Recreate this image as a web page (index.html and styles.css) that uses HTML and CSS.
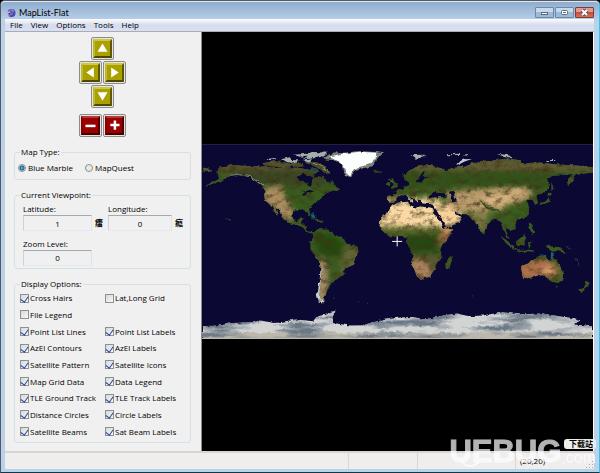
FILE: index.html
```html
<!DOCTYPE html>
<html lang="en">
<head>
  <meta charset="UTF-8" />
  <title>MapList-Flat</title>
  <link rel="stylesheet" href="styles.css">
</head>
<body>
  <div class="window">
    <header class="titlebar">
      <svg class="app-icon" viewBox="0 0 20 20">
        <circle cx="11" cy="10" r="8" fill="#4a43a8"/>
        <path d="M5 5 Q11 0 17 6 L15 9 L10 5 Z" fill="#8c86d8"/>
        <path d="M1 8 L8 6 L11 12 L7 16 L2 13 Z" fill="#b9b4e0"/>
        <path d="M9 8 L15 10 L12 15 L8 13 Z" fill="#6f76b4"/>
        <path d="M4 11 L9 9 L8 15 Z" fill="#39345f"/>
      </svg>
      <span class="title">MapList-Flat</span>
      <div class="window-buttons">
        <button type="button" aria-label="Minimize"><svg viewBox="0 0 17 9"><rect x="5.500" y="4.500" width="6" height="2" fill="#fff" stroke="#5d6a7c"/></svg></button>
        <button type="button" aria-label="Maximize"><svg viewBox="0 0 17 9"><rect x="5.500" y="2.500" width="6" height="4" rx="1" fill="#fff" stroke="#5d6a7c"/><rect x="7" y="4" width="3" height="1" fill="#5d6a7c"/></svg></button>
        <button type="button" class="close" aria-label="Close"><svg viewBox="0 0 17 9"><path d="M6 2 L11 7 M11 2 L6 7" stroke="#6b5361" stroke-width="4"/><path d="M6 2 L11 7 M11 2 L6 7" stroke="#fff" stroke-width="2"/></svg></button>
      </div>
    </header>

    <nav class="menu">
      <a href="#">File</a>
      <a href="#">View</a>
      <a href="#">Options</a>
      <a href="#">Tools</a>
      <a href="#">Help</a>
    </nav>

    <main class="content">
      <form class="sidebar">
        <div class="pad">
          <button type="button" class="key wide" aria-label="Up"><svg viewBox="0 0 18 18"><path d="M9 3 L15 13 H3 Z"/></svg></button>
          <button type="button" class="key" aria-label="Left"><svg viewBox="0 0 18 18"><path d="M4 9 L13 3 V15 Z"/></svg></button>
          <button type="button" class="key" aria-label="Right"><svg viewBox="0 0 18 18"><path d="M14 9 L5 3 V15 Z"/></svg></button>
          <button type="button" class="key wide" aria-label="Down"><svg viewBox="0 0 18 18"><path d="M9 14 L15 4 H3 Z"/></svg></button>
        </div>
        <div class="pad zoom">
          <button type="button" class="key red" aria-label="Zoom out"><svg viewBox="0 0 18 18"><path d="M3 8 H15 V11 H3 Z"/></svg></button>
          <button type="button" class="key red" aria-label="Zoom in"><svg viewBox="0 0 18 18"><path d="M8 3 H11 V7 H15 V10 H11 V14 H8 V10 H4 V7 H8 Z"/></svg></button>
        </div>

        <fieldset class="map-type">
          <legend>Map Type:</legend>
          <label><input type="radio" name="map" checked>Blue Marble</label>
          <label><input type="radio" name="map">MapQuest</label>
        </fieldset>

        <fieldset class="viewpoint">
          <legend>Current Viewpoint:</legend>
          <div class="field">
            <label for="lat">Latitude:</label>
            <input type="text" id="lat" value="1"><span class="unit">癗</span>
          </div>
          <div class="field">
            <label for="lon">Longitude:</label>
            <input type="text" id="lon" value="0"><span class="unit">癊</span>
          </div>
          <div class="field">
            <label for="zoom">Zoom Level:</label>
            <input type="text" id="zoom" value="0">
          </div>
        </fieldset>

        <fieldset class="display">
          <legend>Display Options:</legend>
          <div class="options">
            <label><input type="checkbox" checked>Cross Hairs</label>
            <label><input type="checkbox">Lat,Long Grid</label>
            <label class="first"><input type="checkbox">File Legend</label>
            <label class="first"><input type="checkbox" checked>Point List Lines</label>
            <label><input type="checkbox" checked>Point List Labels</label>
            <label><input type="checkbox" checked>AzEl Contours</label>
            <label><input type="checkbox" checked>AzEl Labels</label>
            <label><input type="checkbox" checked>Satellite Pattern</label>
            <label><input type="checkbox" checked>Satellite Icons</label>
            <label><input type="checkbox" checked>Map Grid Data</label>
            <label><input type="checkbox" checked>Data Legend</label>
            <label><input type="checkbox" checked>TLE Ground Track</label>
            <label><input type="checkbox" checked>TLE Track Labels</label>
            <label><input type="checkbox" checked>Distance Circles</label>
            <label><input type="checkbox" checked>Circle Labels</label>
            <label><input type="checkbox" checked>Satellite Beams</label>
            <label><input type="checkbox" checked>Sat Beam Labels</label>
          </div>
        </fieldset>
      </form>

      <section class="map">
        <svg viewBox="6 12 1176 588" role="img" aria-label="World map">
          <defs>
            <filter id="rough" x="0" y="0" width="100%" height="100%" color-interpolation-filters="sRGB">
              <feTurbulence type="fractalNoise" baseFrequency="0.07" numOctaves="2" seed="4" result="n"/>
              <feDisplacementMap in="SourceGraphic" in2="n" scale="12" xChannelSelector="R" yChannelSelector="G"/>
              <feGaussianBlur stdDeviation="1"/>
            </filter>
            <filter id="soft" x="-20%" y="-20%" width="140%" height="140%" color-interpolation-filters="sRGB"><feGaussianBlur stdDeviation="8"/></filter>
            <filter id="grain" x="0" y="0" width="100%" height="100%" color-interpolation-filters="sRGB">
              <feTurbulence type="fractalNoise" baseFrequency="0.035 0.06" numOctaves="4" seed="9"/>
              <feColorMatrix values="0 0 0 0 0.25  0 0 0 0 0.2  0 0 0 0 0.08  2 0 0 0 -0.900"/>
            </filter>
            <filter id="ice" x="0" y="0" width="100%" height="100%" color-interpolation-filters="sRGB">
              <feTurbulence type="fractalNoise" baseFrequency="0.008 0.05" numOctaves="3" seed="2"/>
              <feColorMatrix values="0 0 0 0 0.42  0 0 0 0 0.47  0 0 0 0 0.52  3 0 0 0 -1.200"/>
            </filter>
            <clipPath id="land">
              <!-- North America -->
              <path d="M50 92 62 80 95 76 140 78 190 80 225 84 260 82 300 84 330 90 345 84 355 95 340 103 343 114 318 100 298 106 290 115 300 124 320 128 332 143 336 132 338 118 352 108 372 112 385 126 398 124 410 138 418 150 400 152 385 158 372 165 358 178 345 188 330 203 328 210 334 225 326 230 320 213 300 208 285 212 278 225 280 240 290 245 300 236 314 236 306 252 322 258 322 272 335 278 345 275 340 284 322 277 308 262 285 254 262 248 250 232 238 215 225 200 232 220 237 230 226 220 215 200 200 188 193 170 194 150 185 138 170 125 150 112 120 104 95 106 75 118 45 130 15 138 40 125 60 114 50 105Z"/>
              <path d="M6 82 24 86 40 92 22 96 6 94ZM188 70 225 64 255 68 280 74 262 82 225 80 195 78ZM318 68 350 66 375 80 392 98 382 102 366 90 345 80ZM274 70 306 70 308 80 280 80ZM330 232 350 238 368 246 350 244ZM352 243 372 243 370 249 352 249ZM521 93 546 92 545 98 525 98Z"/>
              <!-- South America -->
              <path d="M335 280 355 268 385 270 405 285 430 295 445 312 475 322 480 335 468 350 462 375 440 385 430 405 410 420 398 430 385 445 380 460 370 475 375 485 360 485 352 470 358 440 362 410 362 370 348 352 332 325 332 305 342 292Z"/>
              <!-- Africa and Madagascar -->
              <path d="M568 212 578 198 595 189 625 186 632 196 650 204 662 200 690 203 702 208 706 222 718 240 732 262 740 270 762 266 758 280 745 298 730 312 722 330 727 352 712 370 705 390 690 412 662 418 652 410 645 390 635 365 640 345 630 325 622 308 625 295 610 288 585 290 565 287 548 272 540 258 543 235ZM752 350 760 350 750 387 739 389 738 370Z"/>
              <!-- Europe and Asia -->
              <path d="M565 187 567 168 592 166 585 155 600 150 615 142 630 135 628 124 615 118 612 105 630 92 655 80 690 76 725 84 735 92 760 84 800 80 815 70 850 66 890 60 930 55 962 62 970 70 1020 68 1060 72 1110 76 1160 78 1182 82 1182 98 1150 102 1130 106 1122 118 1110 135 1102 132 1108 115 1125 102 1090 106 1060 108 1042 115 1052 128 1048 145 1030 160 1012 170 1017 190 1008 195 1000 180 982 180 990 205 988 225 965 238 950 238 948 250 950 265 935 275 922 262 920 275 932 298 925 295 912 270 905 250 890 236 875 245 860 258 855 284 845 278 832 250 820 238 808 224 785 222 765 215 752 205 770 222 790 232 780 248 755 260 738 266 722 240 706 212 702 194 668 190 665 178 654 176 656 188 642 176 628 170 642 184 636 186 618 168 605 166 590 174 590 185 575 190Z"/>
              <path d="M568 118 580 114 584 124 594 134 595 143 574 143 580 132ZM560 130 572 127 571 138 560 138ZM1057 126 1063 146 1057 154ZM1050 158 1060 166 1048 168 1056 184 1040 191 1022 196 1030 188 1046 180Z"/>
              <!-- Islands and Australia -->
              <path d="M903 288 925 303 946 324 942 329 920 310ZM942 328 975 330 1005 335 1002 339 960 335ZM950 305 975 286 981 294 975 318 952 318ZM986 306 1000 302 990 328ZM988 244 1000 255 1006 282 998 285 990 262ZM1040 316 1060 320 1085 323 1104 341 1075 334 1060 336 1045 326Z"/>
              <path d="M965 380 985 372 1000 362 1020 352 1038 345 1044 358 1055 360 1060 340 1068 358 1080 375 1093 395 1090 418 1075 430 1055 425 1040 412 1015 408 990 415 972 418 968 400ZM1070 438 1079 440 1074 447ZM1158 420 1173 432 1165 442 1145 457 1140 452 1160 438Z"/>
            </clipPath>
            <clipPath id="south"><path d="M6 560 60 558 100 550 160 548 180 543 225 550 290 540 340 545 350 532 385 520 408 513 400 530 400 550 450 558 490 557 520 548 570 538 600 534 640 532 680 540 720 530 770 522 810 530 850 528 910 518 960 525 1030 522 1080 530 1120 535 1145 542 1125 555 1182 560V600H6Z"/></clipPath>
          </defs>
          <rect x="6" y="12" width="1176" height="588" fill="#0b0833"/>
          <g filter="url(#rough)">
            <rect x="-20" y="-20" width="1230" height="640" fill="#0b0833"/>
            <g clip-path="url(#land)">
              <rect x="0" y="0" width="1190" height="600" fill="#3c5a20"/>
              <g filter="url(#soft)">
                <path d="M0 60H420V98H0Z" fill="#57512f"/>
                <path d="M80 92H420V135H180Z" fill="#394623"/>
                <path d="M240 135H400V215H280Z" fill="#375b1d"/>
                <path d="M192 145 245 135 255 170 280 205 282 240 260 240 190 180Z" fill="#aa8d60"/>
                <path d="M335 275 400 285 440 320 420 350 360 345Z" fill="#24490e"/>
                <path d="M430 320H485V400H420Z" fill="#5f6432"/>
                <path d="M358 350 382 370 385 430 375 490H350Z" fill="#a58a68"/>
                <path d="M530 175H720L740 262H530Z" fill="#fad9a4"/>
                <path d="M530 264H735V290H530Z" fill="#526325"/>
                <path d="M620 285H715V335H620Z" fill="#244810"/>
                <path d="M735 265 765 262 750 300 720 320 715 295Z" fill="#a66d46"/>
                <path d="M625 350H730V375H625Z" fill="#5c5730"/>
                <path d="M630 355 665 360 710 388 680 425 640 410Z" fill="#a9805d"/>
                <path d="M700 192 748 190 800 232 740 275Z" fill="#f6d19c"/>
                <path d="M600 60H1185V92H600Z" fill="#625b35"/>
                <path d="M600 94H1060V142H600Z" fill="#33511a"/>
                <path d="M740 158 810 148 990 145 1000 165 960 190 900 212 800 218 752 205Z" fill="#ba9b6c"/>
                <path d="M842 178 920 165 945 180 900 195 850 190Z" fill="#dfbb86"/>
                <path d="M870 145 980 142 975 168 930 162Z" fill="#d2ae7d"/>
                <path d="M812 222 870 215 865 245 850 275 835 260Z" fill="#85804b"/>
                <path d="M920 195 995 185 990 240 920 230Z" fill="#365f1c"/>
                <path d="M565 165 595 168 590 190H565Z" fill="#8b7d4c"/>
                <path d="M960 370 1040 358 1085 385 1070 412 960 420Z" fill="#ad704b"/>
                <path d="M1030 385 1055 380 1060 405 1040 408Z" fill="#dfa779"/>
                <path d="M1060 340 1110 395 1090 440 1078 400Z" fill="#56632e"/>
              </g>
              <path d="M845 184 865 205 905 214" fill="none" stroke="#2f5520" stroke-width="6"/>
              <rect x="0" y="30" width="1190" height="430" filter="url(#grain)"/>
            </g>
            <path d="M370 50 395 41 430 38 480 33 530 36 554 40 534 50 530 65 515 80 490 85 465 95 452 112 440 107 430 90 425 72 405 62 380 58Z" fill="#7d8177"/>
            <path d="M385 50 430 41 480 35 530 38 528 58 508 74 480 82 460 93 450 108 438 98 430 76 410 60Z" fill="#fcfdfd"/>
            <path d="M280 44 312 42 340 36 384 38 366 50 334 56 308 58 332 46 300 50ZM244 58 270 52 276 60 300 62 284 70 258 66ZM204 56 228 54 226 60 206 60ZM310 62 338 58 330 68ZM630 45 682 44 664 52 650 57 640 50ZM742 43 782 41 780 45 746 46ZM790 43 808 42 806 45ZM893 42 920 44 948 51 920 52ZM1040 60 1070 60 1066 63 1044 63Z" fill="#a6b0aa"/>
            <path d="M770 74 780 64 796 58 818 57 796 65 780 73Z" fill="#c4cbd0"/>
            <path d="M92 106 115 104 150 110 170 124 190 138M340 70 362 78 390 94" fill="none" stroke="#a3ae9d" stroke-width="2"/>
            <path d="M353 458 358 484 374 487M360 430 356 470" fill="none" stroke="#cbd2d6" stroke-width="4"/>
            <path d="M364 385 361 430" fill="none" stroke="#b9b5a6" stroke-width="3"/>
            <!-- Inland seas and lakes -->
            <path d="M688 166 704 156 718 160 732 160 744 170 715 172 692 174ZM752 155 768 152 764 168 773 185 762 187 754 172ZM648 126 662 108 672 94 676 98 668 110 690 112 675 116 666 128ZM304 150 316 156 310 166 318 168 322 156 332 158 344 154 328 150 318 154Z" fill="#0b0833"/>
            <path d="M702 208 708 206 740 262 734 264Z" fill="#0b0833"/>
            <path d="M336 218 344 226 348 236 338 232ZM1056 336 1062 340 1060 360 1055 358ZM1020 346 1038 342 1036 348Z" fill="#12697e"/>
            <path d="M330 82 354 86 350 92 332 90Z" fill="#1c4a4c"/>
            <path d="M80 236 90 241M1098 320 1114 328M1128 356 1140 378M398 474 404 475M472 484 478 484M504 494 508 496M818 466 824 466" fill="none" stroke="#2c4540" stroke-width="3"/>
            <g clip-path="url(#south)">
              <rect x="0" y="500" width="1190" height="110" fill="#d2d4d4"/>
              <rect x="0" y="580" width="1190" height="30" fill="#bdb8ab"/>
              <rect x="0" y="500" width="1190" height="110" filter="url(#ice)"/>
            </g>
          </g>
          <path d="M6 13H1182" stroke="#27264a" stroke-width="3"/>
          <path d="M6 598H1182" stroke="#bdb9ae" stroke-width="6"/>
          <path d="M578 305H608M593 290V320" stroke="#fff" stroke-width="3"/>
        </svg>
      </section>
    </main>

    <footer class="status">
      <span></span>
      <span></span>
      <span></span>
      <span class="coords">(20,20)</span>
      <svg class="grip" viewBox="0 0 8 8"><path d="M6 0h1v1H6zM3 3h1v1H3zM6 3h1v1H6zM0 6h1v1H0zM3 6h1v1H3zM6 6h1v1H6z"/></svg>
    </footer>
  </div>

  <div class="watermark">
    <span class="brand">UEBUG</span>
    <div class="suffix">
      <span class="tag">下载站</span>
      <span class="com">.com</span>
    </div>
    <svg class="smile" viewBox="0 0 30 10"><path d="M7 1 Q15 9 24 1" fill="none" stroke="#fff" stroke-width="2"/></svg>
  </div>
</body>
</html>
```
FILE: styles.css
```css
* {
  box-sizing: border-box;
}
body {
  margin: 0;
  font-family: "Open Sans", "Noto Sans", "Noto Sans CJK SC", sans-serif;
  font-size: 8px;
  line-height: 12px;
  color: #000;
  background: #000;
}
button, input {
  font: inherit;
  color: inherit;
  margin: 0;
  padding: 0;
}
.window {
  display: flex;
  flex-direction: column;
  height: 100vh;
  padding: 0 5px 3px 4px;
  background: #b9d1ea;
  border: 1px solid #55585c;
  border-right-color: #35c3e8;
  border-bottom-color: #0c3b47;
  border-radius: 5px 5px 0 0;
}

/* title bar */
.titlebar {
  display: flex;
  align-items: center;
  height: 18px;
  margin: 0 -5px 0 -4px;
  padding: 4px 5px 0 5px;
  background: linear-gradient(#8fadcf, #b6cde7);
  border-top: 1px solid #dce8f4;
  border-radius: 4px 4px 0 0;
}
.app-icon {
  width: 10px;
  height: 10px;
}
.title {
  margin-left: 3px;
  font-family: Lato, sans-serif;
  font-size: 9px;
}
.window-buttons {
  display: flex;
  gap: 1px;
  margin-left: auto;
}
.window-buttons button {
  display: flex;
  width: 19px;
  height: 11px;
  border: 1px solid #6f88a6;
  border-radius: 1px;
  background: linear-gradient(#c5d8ec 50%, #9db9d8 50%);
}
.window-buttons svg {
  width: 100%;
  height: 100%;
}
.window-buttons .close {
  border-color: #7c3c3c;
  background: linear-gradient(#e19a8c 45%, #c4493a 45%, #d8705a);
}

/* menu */
.menu {
  display: flex;
  gap: 8px;
  height: 13px;
  padding-left: 5px;
  background: linear-gradient(#fcfdfe, #d6dcee 50%, #d9e0f2);
  border-bottom: 1px solid #a9acb5;
}
.menu a {
  color: inherit;
  text-decoration: none;
}

.content {
  display: flex;
  flex: 1;
  min-height: 0;
}
.sidebar {
  width: 197px;
  padding: 5px 10px 0 9px;
  background: #f0f0f0;
  border-right: 1px solid #8c8c8c;
}

/* arrow and zoom keys */
.pad {
  display: grid;
  grid-template-columns: 23px 23px;
  gap: 1px;
  justify-content: center;
}
.zoom {
  margin-top: 6px;
}
.key {
  display: flex;
  width: 23px;
  height: 23px;
  padding: 1px;
  background: #e4e4e4;
  border: 1px solid #8b8b8b;
  border-radius: 2px;
}
.key.wide {
  grid-column: 1 / 3;
  justify-self: center;
}
.key svg {
  width: 100%;
  height: 100%;
  background: #aaa000;
  border: 2px solid;
  border-color: #d1c83e #5e5900 #4d4900 #c1b829;
}
.key path {
  fill: #fff;
}
.key.red svg {
  background: #9b0000;
  border-color: #b53b3b #500000 #430000 #890000;
}

/* groups */
fieldset {
  margin: 0;
  padding: 0 0 0 5px;
  border: 1px solid #d3e0e6;
  border-radius: 3px;
}
legend {
  padding: 0 1px;
  height: 12px;
}
.map-type {
  display: flex;
  gap: 12px;
  height: 34px;
  margin-top: 9px;
  padding-left: 3px;
}
.map-type legend {
  margin-left: 2px;
}
.map-type label {
  display: flex;
  align-items: center;
  height: 20px;
}
input[type="radio"] {
  appearance: none;
  width: 8px;
  height: 8px;
  margin-right: 2px;
  border: 1px solid #8e8f8f;
  border-radius: 50%;
  background: #e9e9e9;
}
input[type="radio"]:checked {
  background: radial-gradient(circle, #34b5e0 0 1px, #15507a 2px, #e4edf2 3px);
}
.viewpoint {
  display: grid;
  grid-template-columns: 85px 80px;
  row-gap: 4px;
  height: 80px;
  margin-top: 9px;
  padding-top: 2px;
}
.viewpoint .field {
  padding-left: 3px;
  height: 28px;
}
.field label {
  display: block;
}
.field input {
  width: 69px;
  height: 16px;
  text-align: center;
  background: #f0f0f0;
  border: 1px solid;
  border-color: #a5a8ad #dfe3e8 #e3e9ef #cfd3d8;
  vertical-align: top;
}
.field:nth-of-type(2) input {
  width: 64px;
}
.unit {
  display: inline-block;
  margin-left: 3px;
  font-weight: bold;
  line-height: 16px;
}
.display {
  margin-top: 9px;
}
.options {
  display: grid;
  grid-template-columns: 85px 85px;
  grid-auto-rows: 1fr;
  height: 150px;
  margin-bottom: 2px;
}
.options label {
  display: flex;
  align-items: center;
  white-space: nowrap;
}
.options .first {
  grid-column: 1;
}
input[type="checkbox"] {
  appearance: none;
  display: grid;
  place-items: center;
  width: 9px;
  height: 9px;
  margin-right: 1px;
  border: 1px solid #8e8f8f;
  background: linear-gradient(135deg, #d4d8dc, #f8f8f8);
}
input[type="checkbox"]:checked::after {
  content: "";
  width: 4px;
  height: 6px;
  border: solid #2c4396;
  border-width: 0 1px 1px 0;
  transform: rotate(35deg);
}

/* map */
.map {
  display: flex;
  flex: 1;
  align-items: center;
  min-width: 0;
  background: #000;
  border-right: 1px solid #fff;
}
.map svg {
  display: block;
  width: 100%;
}

/* status bar */
.status {
  display: grid;
  grid-template-columns: 344px 1fr 98px 70px 8px;
  height: 18px;
  background: #f0eded;
  border-top: 2px solid #d6d4d4;
}
.status span {
  border-right: 1px solid #dad7d7;
}
.status .coords {
  padding-left: 4px;
  line-height: 16px;
  border: none;
}
.grip {
  width: 8px;
  height: 8px;
  align-self: end;
  fill: #aaa;
}

/* site mark laid over the corner */
.watermark {
  position: absolute;
  right: 4px;
  bottom: 6px;
  display: flex;
  align-items: flex-end;
  color: #fff;
  pointer-events: none;
}
.brand {
  font-family: "Liberation Sans", Arial, sans-serif;
  font-size: 31px;
  font-weight: bold;
  line-height: 31px;
  opacity: 0.7;
  -webkit-text-stroke: 1px #fff;
}
.suffix {
  display: flex;
  flex-direction: column;
  align-items: flex-end;
}
.tag {
  padding: 0 3px 0 5px;
  font-family: "Noto Sans CJK SC", sans-serif;
  font-weight: bold;
  line-height: 10px;
  background: #eee;
  color: #000;
  border-radius: 3px;
}
.com {
  font-family: "Liberation Sans", Arial, sans-serif;
  font-size: 16px;
  line-height: 18px;
  opacity: 0.7;
}
.smile {
  position: absolute;
  left: 6px;
  bottom: -4px;
  width: 30px;
  height: 10px;
  opacity: 0.7;
}
```
